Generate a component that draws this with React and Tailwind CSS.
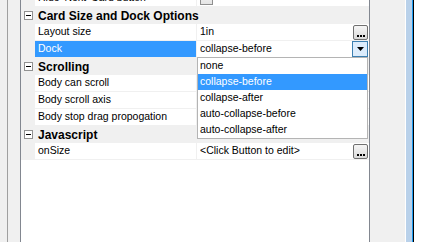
import React from "react";

const font = { fontFamily: '"Liberation Sans", Arial, sans-serif' };

function Minus() {
  return (
    <div className="w-[9px] h-[9px] border border-[#919191] bg-white flex items-center justify-center">
      <div className="w-[5px] h-[1px] bg-black" />
    </div>
  );
}

function Ellipsis() {
  return (
    <div className="w-[15px] h-[15px] rounded-[2px] border border-[#707070] bg-gradient-to-b from-[#f6f6f6] to-[#dadada] flex items-end justify-center pb-[2px]">
      <div className="flex gap-[1px]">
        <div className="w-[2px] h-[2px] bg-black" />
        <div className="w-[2px] h-[2px] bg-black" />
        <div className="w-[2px] h-[2px] bg-black" />
      </div>
    </div>
  );
}

function DropBtn() {
  return (
    <div className="w-[16px] h-[16px] border border-[#3c7fb1] bg-[#dcecfc] flex items-center justify-center">
      <svg width="7" height="4" viewBox="0 0 7 4">
        <polygon points="0,0 7,0 3.5,4" fill="#000" />
      </svg>
    </div>
  );
}

function Category({ label }) {
  return (
    <div className="flex h-[17px] bg-[#f0f0f0]">
      <div className="w-[14px] flex items-center pl-[3px]">
        <Minus />
      </div>
      <div className="pl-[3px] flex items-center text-[12px] font-bold text-black">{label}</div>
    </div>
  );
}

function Prop({ label, value, selected, right }) {
  return (
    <div className="flex h-[17px]">
      <div className="w-[14px] bg-[#f0f0f0]" />
      <div
        className={
          "w-[161px] h-[17px] border-b border-[#f0f0f0] pl-[3px] flex items-center text-[10.5px] whitespace-nowrap overflow-hidden " +
          (selected ? "bg-[#3399ff] text-white" : "bg-white text-black")
        }
      >
        {label}
      </div>
      <div className="w-[1px] bg-[#f0f0f0]" />
      <div className="flex-1 h-[17px] border-b border-[#f0f0f0] flex items-center pl-[3px] pr-[1px] text-[10.5px] text-black">
        <div className="flex-1 whitespace-nowrap overflow-hidden">{value}</div>
        {right}
      </div>
    </div>
  );
}

export default function App() {
  const items = ["none", "collapse-before", "collapse-after", "auto-collapse-before", "auto-collapse-after"];
  return (
    <div className="w-[429px] h-[242px] flex bg-white overflow-hidden" style={font}>
      <div className="w-[7px] bg-[#f0f0f0]" />
      <div className="w-[1px] bg-[#a0a0a0]" />
      <div className="w-[12px] bg-[#f0f0f0]" />
      <div className="w-[1px] bg-[#828790]" />
      <div className="w-[348px] relative bg-white overflow-hidden">
        <div className="mt-[-10px] flex flex-col">
          <Prop
            label="Hide 'Next' Card button"
            value=""
            right={
              <div className="absolute left-[179px] top-[-8px] w-[13px] h-[13px] border border-[#8f8f8f] bg-gradient-to-b from-[#f4f4f4] to-[#e4e4e4]" />
            }
          />
          <Category label="Card Size and Dock Options" />
          <Prop label="Layout size" value="1in" right={<Ellipsis />} />
          <Prop label="Dock" value="collapse-before" selected right={<DropBtn />} />
          <Category label="Scrolling" />
          <Prop label="Body can scroll" value="" />
          <Prop label="Body scroll axis" value="" />
          <Prop label="Body stop drag propogation" value="" />
          <Category label="Javascript" />
          <Prop label="onSize" value="<Click Button to edit>" right={<Ellipsis />} />
        </div>
        <div className="absolute left-[176px] top-[57px] w-[171px] border border-[#b4b4b4] bg-white">
          {items.map((it, i) => (
            <div
              key={it}
              className={
                "h-[16px] pl-[2px] flex items-center text-[10.5px] whitespace-nowrap " +
                (i === 1 ? "bg-[#3399ff] text-white" : "text-black")
              }
            >
              {it}
            </div>
          ))}
        </div>
      </div>
      <div className="w-[1px] bg-[#828790]" />
      <div className="w-[35px] bg-[#f0f0f0]" />
      <div className="w-[1px] bg-white" />
      <div className="w-[6px] bg-[#b9d1ea]" />
      <div className="w-[1px] bg-[#1e9bf0]" />
      <div className="w-[1px] bg-black" />
      <div className="flex-1 bg-white" />
    </div>
  );
}
